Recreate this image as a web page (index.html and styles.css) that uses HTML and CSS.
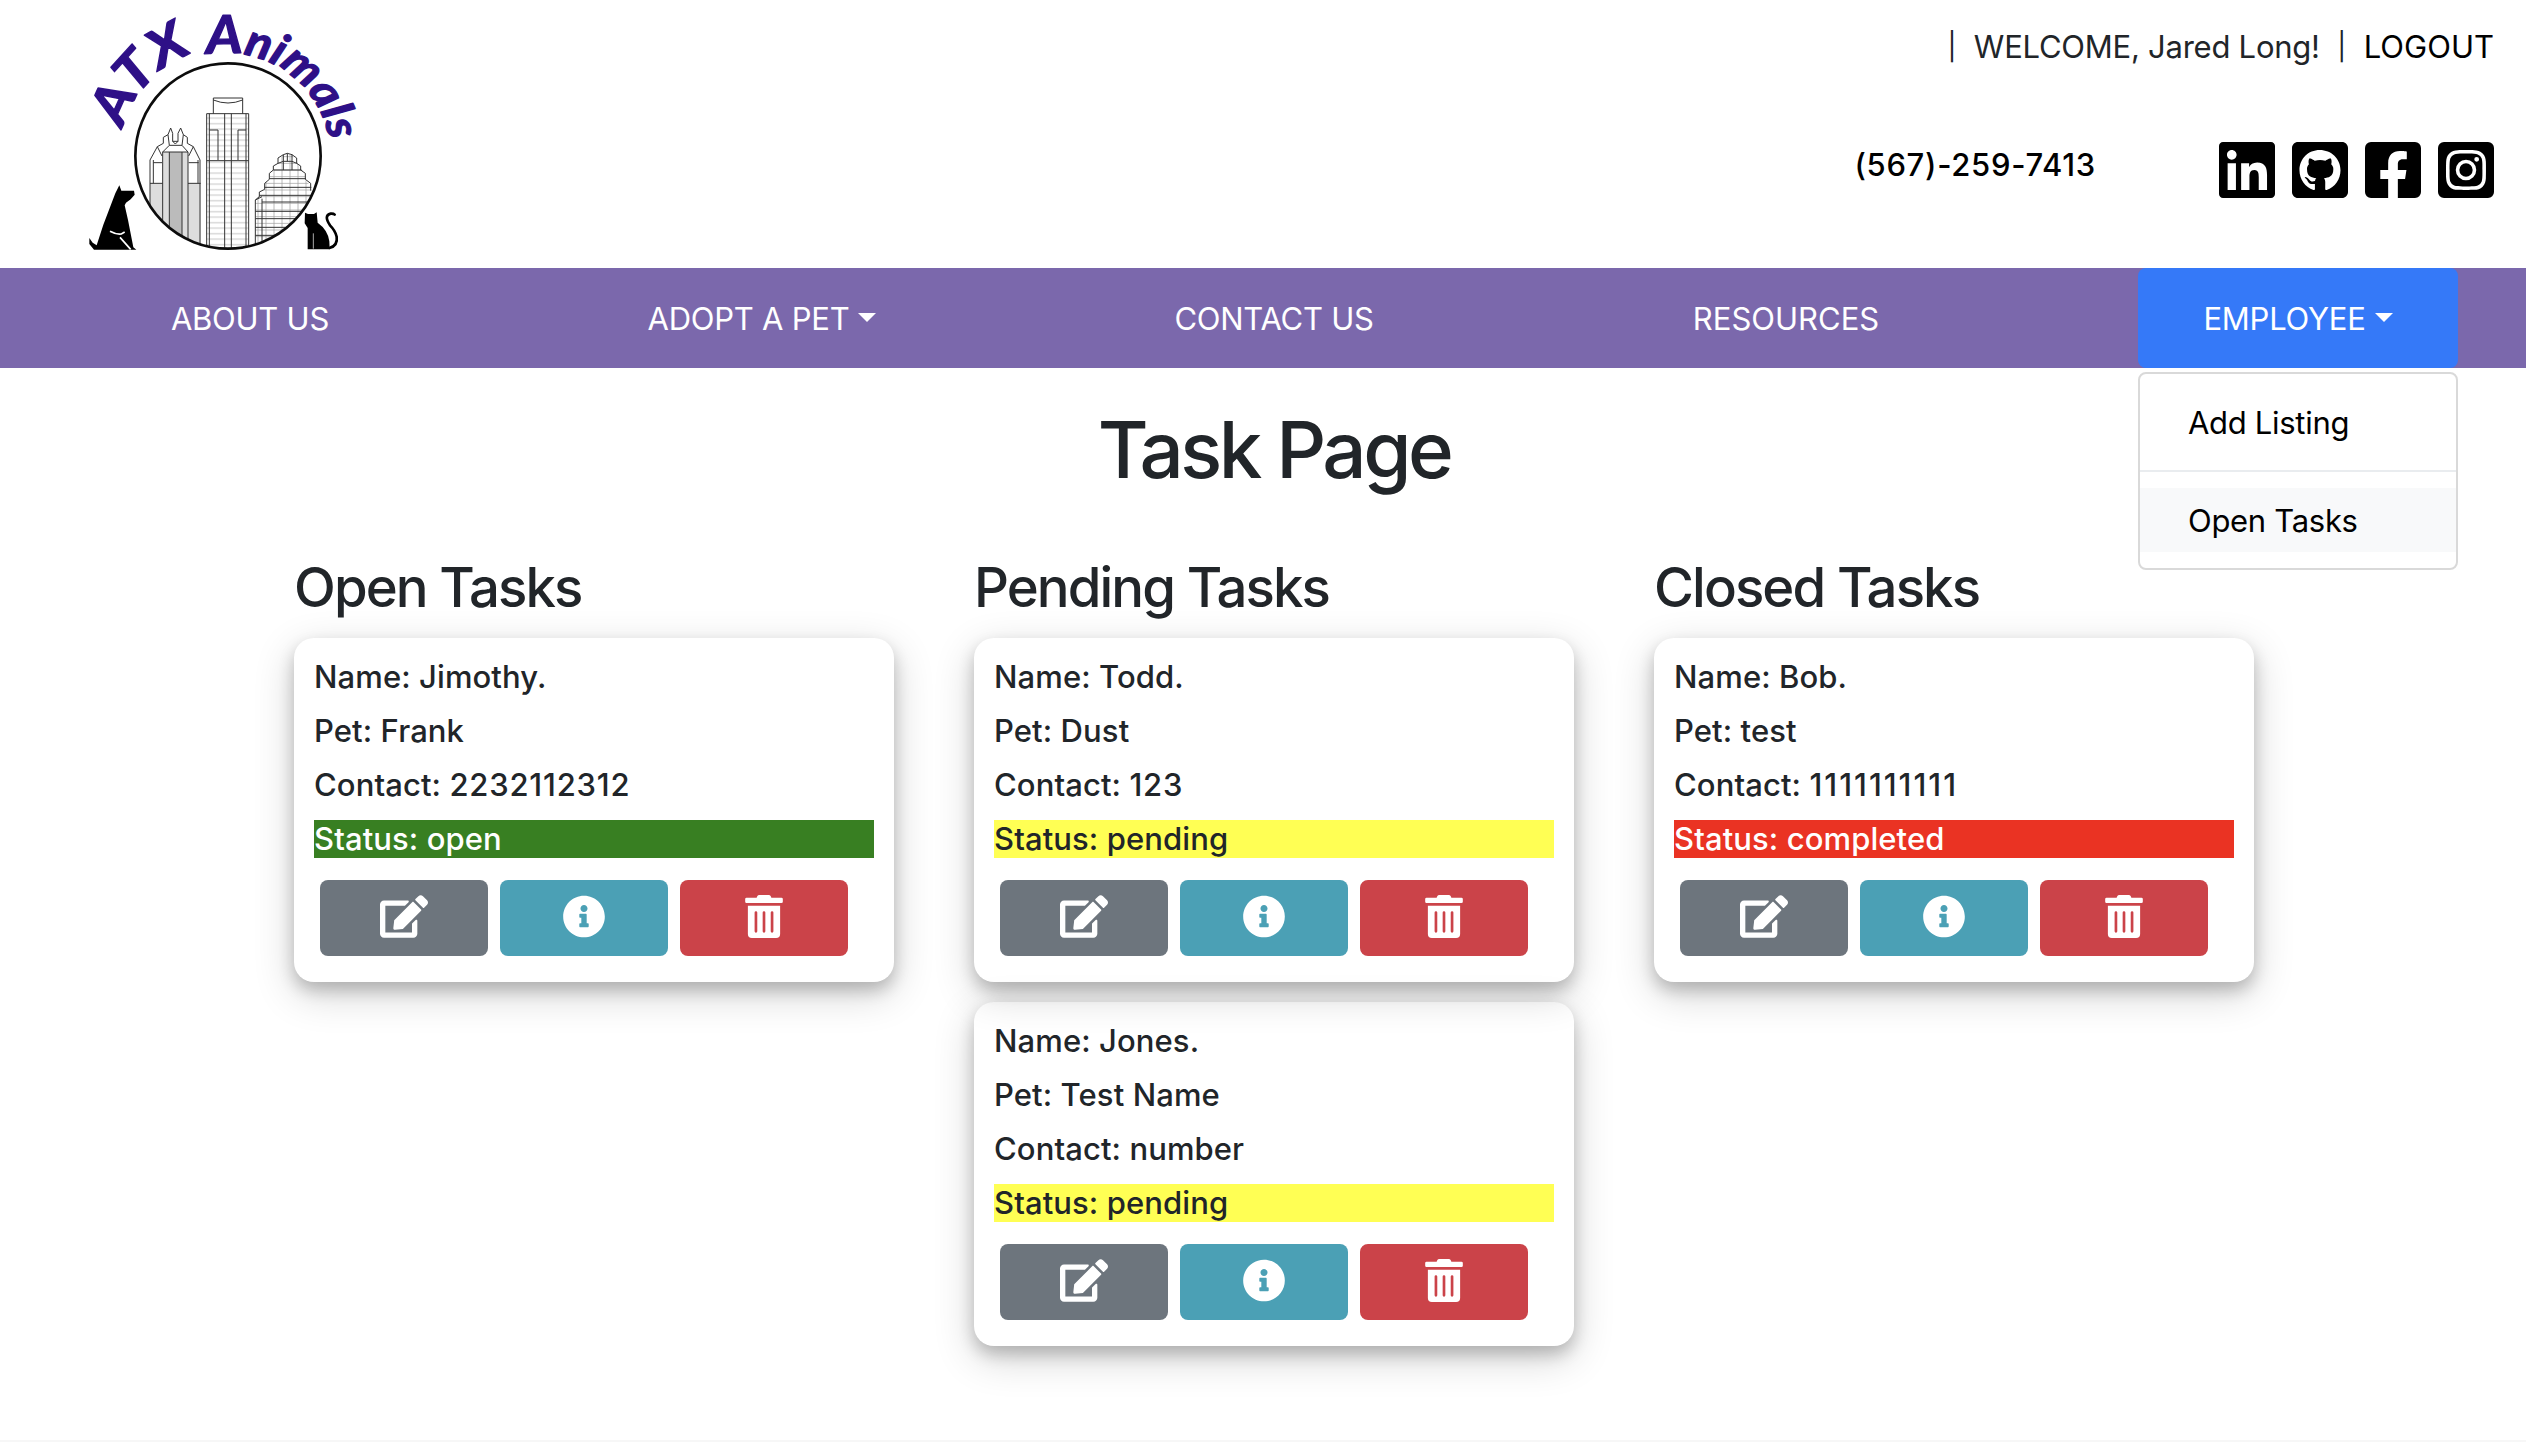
FILE: index.html
```html
<!DOCTYPE html>
<html lang="en">
<head>
<meta charset="utf-8">
<title>ATX Animals - Task Page</title>
<link rel="stylesheet" href="styles.css">
</head>
<body>
<svg class="sprite" aria-hidden="true">
  <symbol id="i-linkedin" viewBox="0 0 448 512"><path d="M416 32H31.9C14.3 32 0 46.5 0 64.3v383.4C0 465.5 14.3 480 31.9 480H416c17.6 0 32-14.5 32-32.3V64.3c0-17.8-14.4-32.3-32-32.3zM135.4 416H69V202.2h66.5V416zm-33.2-243c-21.3 0-38.5-17.3-38.5-38.5S80.9 96 102.2 96c21.2 0 38.5 17.3 38.5 38.5 0 21.3-17.2 38.5-38.5 38.5zm282.1 243h-66.4V312c0-24.8-.5-56.7-34.5-56.7-34.6 0-39.9 27-39.9 54.9V416h-66.4V202.2h63.7v29.2h.9c8.9-16.8 30.6-34.5 62.9-34.5 67.2 0 79.7 44.3 79.7 101.9V416z"/></symbol>
  <symbol id="i-github" viewBox="0 0 448 512"><path fill-rule="evenodd" d="M400 32H48C21.5 32 0 53.5 0 80v352c0 26.5 21.5 48 48 48h352c26.5 0 48-21.5 48-48V80c0-26.5-21.5-48-48-48zM277.3 415.7c-8.4 1.5-11.5-3.7-11.5-8 0-5.4.2-33 .2-55.3 0-15.6-5.2-25.5-11.3-30.7 37-4.1 76-9.2 76-73.1 0-18.2-6.5-27.3-17.1-39 1.7-4.3 7.4-22-1.7-45-13.9-4.3-45.7 17.9-45.7 17.9-13.2-3.7-27.5-5.6-41.6-5.6-14.1 0-28.4 1.9-41.6 5.6 0 0-31.8-22.2-45.7-17.9-9.1 22.9-3.5 40.6-1.7 45-10.6 11.7-15.6 20.8-15.6 39 0 63.6 37.3 69 74.3 73.1-4.8 4.3-9.1 11.7-10.6 22.3-9.5 4.3-33.8 11.7-48.3-13.9-9.1-15.8-25.5-17.1-25.5-17.1-16.2-.2-1.1 10.2-1.1 10.2 10.8 5 18.4 24.2 18.4 24.2 9.7 29.7 56.1 19.7 56.1 19.7 0 13.9.2 36.5.2 40.6 0 4.3-3 9.5-11.5 8-66-22.1-112.2-84.9-112.2-158.3 0-91.8 70.2-161.5 162-161.5S388 165.6 388 257.4c.1 73.4-44.7 136.3-110.7 158.3z"/></symbol>
  <symbol id="i-facebook" viewBox="0 0 448 512"><path d="M400 32H48A48 48 0 0 0 0 80v352a48 48 0 0 0 48 48h137.25V327.69h-63V256h63v-54.64c0-62.15 37-96.48 93.67-96.48 27.14 0 55.52 4.84 55.52 4.84v61h-31.27c-30.81 0-40.42 19.12-40.42 38.73V256h68.78l-11 71.69h-57.78V480H400a48 48 0 0 0 48-48V80a48 48 0 0 0-48-48z"/></symbol>
  <symbol id="i-instagram" viewBox="0 0 448 512"><path d="M224,202.66A53.34,53.34,0,1,0,277.36,256,53.38,53.38,0,0,0,224,202.66Zm124.71-41a54,54,0,0,0-30.41-30.41c-21-8.29-71-6.43-94.3-6.43s-73.25-1.93-94.31,6.43a54,54,0,0,0-30.41,30.41c-8.28,21-6.43,71.05-6.43,94.33S91,329.26,99.32,350.33a54,54,0,0,0,30.41,30.41c21,8.29,71,6.43,94.31,6.43s73.24,1.93,94.3-6.43a54,54,0,0,0,30.41-30.41c8.35-21,6.43-71.05,6.43-94.33S357.1,182.74,348.75,161.67ZM224,338a82,82,0,1,1,82-82A81.9,81.9,0,0,1,224,338Zm85.38-148.3a19.14,19.14,0,1,1,19.13-19.14A19.1,19.1,0,0,1,309.42,189.74ZM400,32H48A48,48,0,0,0,0,80V432a48,48,0,0,0,48,48H400a48,48,0,0,0,48-48V80A48,48,0,0,0,400,32ZM382.88,322c-1.29,25.63-7.14,48.34-25.85,67s-41.4,24.63-67,25.85c-26.41,1.49-105.59,1.49-132,0-25.63-1.29-48.26-7.15-67-25.85s-24.63-41.42-25.85-67c-1.49-26.42-1.49-105.61,0-132,1.29-25.63,7.07-48.34,25.85-67s41.47-24.56,67-25.78c26.41-1.49,105.59-1.49,132,0,25.63,1.29,48.33,7.15,67,25.85s24.63,41.42,25.85,67.05C384.37,216.44,384.37,295.56,382.88,322Z"/></symbol>
  <symbol id="i-edit" viewBox="0 0 576 512"><path d="M402.6 83.2l90.2 90.2c3.8 3.8 3.8 10 0 13.8L274.4 405.6l-92.8 10.3c-12.4 1.4-22.9-9.1-21.5-21.5l10.3-92.8L388.8 83.2c3.8-3.8 10-3.8 13.8 0zm162-22.9l-48.8-48.8c-15.2-15.2-39.9-15.2-55.2 0l-35.4 35.4c-3.8 3.8-3.8 10 0 13.8l90.2 90.2c3.8 3.8 10 3.8 13.8 0l35.4-35.4c15.2-15.3 15.2-40 0-55.2zM384 346.2V448H64V128h229.8c3.2 0 6.2-1.3 8.5-3.5l40-40c7.6-7.6 2.2-20.5-8.5-20.5H48C21.5 64 0 85.5 0 112v352c0 26.5 21.5 48 48 48h352c26.5 0 48-21.5 48-48V306.2c0-10.7-12.9-16-20.5-8.5l-40 40c-2.2 2.3-3.5 5.3-3.5 8.5z"/></symbol>
  <symbol id="i-info" viewBox="0 0 512 512"><path d="M256 8C119.043 8 8 119.083 8 256c0 136.997 111.043 248 248 248s248-111.003 248-248C504 119.083 392.957 8 256 8zm0 110c23.196 0 42 18.804 42 42s-18.804 42-42 42-42-18.804-42-42 18.804-42 42-42zm56 254c0 6.627-5.373 12-12 12h-88c-6.627 0-12-5.373-12-12v-24c0-6.627 5.373-12 12-12h12v-64h-12c-6.627 0-12-5.373-12-12v-24c0-6.627 5.373-12 12-12h64c6.627 0 12 5.373 12 12v100h12c6.627 0 12 5.373 12 12v24z"/></symbol>
  <symbol id="i-trash" viewBox="0 0 448 512"><path d="M32 464a48 48 0 0 0 48 48h288a48 48 0 0 0 48-48V128H32zm272-256a16 16 0 0 1 32 0v224a16 16 0 0 1-32 0zm-96 0a16 16 0 0 1 32 0v224a16 16 0 0 1-32 0zm-96 0a16 16 0 0 1 32 0v224a16 16 0 0 1-32 0zM432 32H312l-9.4-18.7A24 24 0 0 0 281.1 0H166.8a23.72 23.72 0 0 0-21.4 13.3L136 32H16A16 16 0 0 0 0 48v32a16 16 0 0 0 16 16h416a16 16 0 0 0 16-16V48a16 16 0 0 0-16-16z"/></symbol>
</svg>

<header class="header">
  <svg class="logo" viewBox="0 0 930 804" role="img" aria-label="ATX Animals">
    <defs>
      <path id="arc-atx" d="M160 385A325 325 0 0 1 384 156"/>
      <path id="arc-animals" d="M410 166A310 310 0 0 1 780 440"/>
      <clipPath id="ring"><circle cx="474" cy="468" r="276"/></clipPath>
      <pattern id="floors" width="22" height="16.5" patternUnits="userSpaceOnUse"><path d="M0 8H22" stroke="#aaa" stroke-width="2"/></pattern>
      <pattern id="grid" width="24" height="20" patternUnits="userSpaceOnUse"><path d="M0 10H24M12 0V20" stroke="#999" stroke-width="2" fill="none"/></pattern>
    </defs>
    <text class="logo-text"><textPath href="#arc-atx" textLength="318" lengthAdjust="spacingAndGlyphs">ATX</textPath></text>
    <text class="logo-text logo-text-small"><textPath href="#arc-animals" textLength="500" lengthAdjust="spacingAndGlyphs"><tspan class="logo-cap">A</tspan>nimals</textPath></text>
    <g clip-path="url(#ring)" fill="none" stroke="#333" stroke-width="3">
      <path fill="#ddd" stroke="none" d="M240 550H278V456H354V550H392V760H240z"/>
      <path fill="#bbb" stroke="none" d="M298 456H336V760H298z"/>
      <path d="M240 760V480L262 440L280 430V412L294 404L302 384L308 400V424H324V400L332 384L340 404L352 412V430L370 440L390 480V760M240 550H278M354 550H392M250 488H276M356 488H386M278 760V456H354V760M298 456V760M336 456V760M250 480V550M384 480V550M278 456L298 436H336L354 456M262 440L276 468M370 440L356 468M294 404L298 436M340 404L336 436M308 424L316 432L324 424"/>
      <path fill="url(#floors)" d="M410 760V341H536V760z"/>
      <path d="M430 341V294H518V341M430 300Q474 318 518 300M418 341V760M528 341V760M464 341V760M484 341V760M410 482H536M418 390H444V480M528 390H504V480"/>
      <path fill="url(#grid)" stroke="none" d="M556 760V600L584 570V550L600 540V520L622 500L630 474L652 460L676 474L688 500L706 520V540L724 560L732 760z"/>
      <path d="M556 760V600L568 590V576L584 568V550L598 538V520L610 510V498L624 490V474L640 464L652 460L666 464L680 474V490L692 498V510L706 520V538L722 550V572M576 760V596M556 600L576 590M640 464V510M652 460V484M666 464V510M624 490L640 484H666L680 490M610 510H694M598 536H708M584 562H724M568 586H730M576 606H730M556 634H720M556 656H710M556 682H690M556 706H680"/>
    </g>
    <circle cx="474" cy="468" r="278" fill="none" stroke="#0c0c0c" stroke-width="8"/>
    <path d="M148 556L154 572H192L194 584L182 598L168 608L164 616L174 660L190 742L199 749H72L58 732V714L68 728L80 736L100 674L136 580z"/>
    <path fill="none" stroke="#fff" stroke-width="5" d="M120 694Q138 704 154 702L164 696M150 712L182 748"/>
    <path d="M705 638L714 642H732L740 637L743 668Q774 690 778 724L779 748H713V684L704 670z"/>
    <path fill="none" stroke="#000" stroke-width="8" stroke-linecap="round" d="M778 744Q804 738 800 710Q796 692 780 676Q760 646 782 641Q790 640 794 644"/>
    <path fill="none" stroke="#fff" stroke-width="2" d="M730 700V746"/>
  </svg>
  <div class="header-side">
    <div class="account"><span class="bar">|</span><span>WELCOME, Jared Long!</span><span class="bar">|</span><a class="logout">LOGOUT</a></div>
    <div class="contact">
      <span class="phone">(567)-259-7413</span>
      <div class="social">
        <svg><use href="#i-linkedin"/></svg><svg><use href="#i-github"/></svg><svg><use href="#i-facebook"/></svg><svg><use href="#i-instagram"/></svg>
      </div>
    </div>
  </div>
</header>

<nav class="nav">
  <a class="nav-item">ABOUT US</a>
  <a class="nav-item caret">ADOPT A PET</a>
  <a class="nav-item">CONTACT US</a>
  <a class="nav-item resources">RESOURCES</a>
  <div class="dropdown">
    <a class="nav-item caret active">EMPLOYEE</a>
    <div class="menu">
      <a class="menu-item">Add Listing</a>
      <div class="divider"></div>
      <a class="menu-item hover">Open Tasks</a>
    </div>
  </div>
</nav>

<main class="main">
  <h1>Task Page</h1>
  <div class="columns">
    <section class="column">
      <h2>Open Tasks</h2>
      <article class="card">
        <p>Name: Jimothy.</p><p>Pet: Frank</p><p>Contact: <span class="digits">2232112312</span></p><p class="open">Status: open</p>
        <div class="actions"><button class="btn edit"><svg><use href="#i-edit"/></svg></button><button class="btn info"><svg><use href="#i-info"/></svg></button><button class="btn delete"><svg><use href="#i-trash"/></svg></button></div>
      </article>
    </section>
    <section class="column">
      <h2>Pending Tasks</h2>
      <article class="card">
        <p>Name: Todd.</p><p>Pet: Dust</p><p>Contact: <span class="digits">123</span></p><p class="pending">Status: pending</p>
        <div class="actions"><button class="btn edit"><svg><use href="#i-edit"/></svg></button><button class="btn info"><svg><use href="#i-info"/></svg></button><button class="btn delete"><svg><use href="#i-trash"/></svg></button></div>
      </article>
      <article class="card">
        <p>Name: Jones.</p><p>Pet: Test Name</p><p>Contact: number</p><p class="pending">Status: pending</p>
        <div class="actions"><button class="btn edit"><svg><use href="#i-edit"/></svg></button><button class="btn info"><svg><use href="#i-info"/></svg></button><button class="btn delete"><svg><use href="#i-trash"/></svg></button></div>
      </article>
    </section>
    <section class="column">
      <h2>Closed Tasks</h2>
      <article class="card">
        <p>Name: Bob.</p><p>Pet: test</p><p>Contact: <span class="digits wide">1111111111</span></p><p class="completed">Status: completed</p>
        <div class="actions"><button class="btn edit"><svg><use href="#i-edit"/></svg></button><button class="btn info"><svg><use href="#i-info"/></svg></button><button class="btn delete"><svg><use href="#i-trash"/></svg></button></div>
      </article>
    </section>
  </div>
</main>
<footer class="footer"></footer>
</body>
</html>
```
FILE: styles.css
```css
* { box-sizing: border-box; }

body {
  margin: 0;
  height: 1442px;
  overflow: hidden;
  display: flex;
  flex-direction: column;
  background: #fff;
  color: #212529;
  font: 400 31px/38px Inter, "Liberation Sans", sans-serif;
  letter-spacing: -0.25px;
}

.sprite { display: none; }

.header {
  flex: none;
  height: 268px;
  padding: 0 32px 0 70px;
  display: flex;
  justify-content: space-between;
}

.logo { width: 310px; height: 268px; }

.logo-text {
  font: italic 700 158px Lato, sans-serif;
  letter-spacing: 0;
  fill: #2e1087;
  stroke: #2e1087;
  stroke-width: 4px;
  stroke-linejoin: round;
}

.logo-text-small { font-size: 134px; }
.logo-cap { font-size: 158px; }

.header-side {
  display: flex;
  flex-direction: column;
  align-items: flex-end;
  padding-top: 28px;
}

.account { display: flex; gap: 17px; }
.bar { font-size: 27px; line-height: 37px; width: 10px; text-align: center; }
.logout { color: #000; letter-spacing: 0; }

.contact {
  display: flex;
  align-items: flex-start;
  gap: 123px;
  margin-top: 72px;
}

.phone {
  color: #000;
  font-weight: 500;
  letter-spacing: 0.7px;
  padding-top: 8px;
}

.social { display: flex; gap: 17px; }
.social svg { width: 56px; height: 64px; }

.nav {
  flex: none;
  height: 100px;
  padding-left: 90px;
  display: flex;
  gap: 192px;
  background: #7b68ac;
}

.nav-item {
  width: 320px;
  height: 100px;
  padding-top: 1px;
  display: flex;
  align-items: center;
  justify-content: center;
  color: #fff;
}

.nav-item.resources { letter-spacing: 0; }

.caret::after {
  content: "";
  margin-left: 9px;
  margin-top: -3px;
  border: 9px solid transparent;
  border-top-color: #fff;
  border-bottom: 0;
}

.dropdown { position: relative; }

.nav-item.active {
  background: #3579f8;
  border-radius: 8px;
}

.menu {
  position: absolute;
  top: 104px;
  left: 0;
  width: 320px;
  padding: 16px 0;
  background: #fff;
  border: 2px solid #d9d9d9;
  border-radius: 8px;
}

.menu-item {
  display: block;
  padding: 14px 48px 12px;
  color: #000;
  letter-spacing: -0.3px;
}

.menu-item.hover { background: #f8f9fa; }

.divider {
  height: 2px;
  margin: 16px 0;
  background: #e9ecef;
}

.main {
  flex: 1;
  min-height: 0;
  width: 1960px;
  margin-left: 294px;
  padding-top: 34px;
}

h1 {
  margin: 0 0 56px;
  text-align: center;
  font-size: 78px;
  font-weight: 500;
  line-height: 96px;
  letter-spacing: -3.5px;
}

h2 {
  margin: 0 0 17px;
  font-size: 54.5px;
  font-weight: 500;
  line-height: 67px;
  letter-spacing: -1.9px;
}

.columns { display: flex; gap: 80px; }

.column { width: 600px; }

.card {
  height: 344px;
  padding: 20px;
  margin-bottom: 20px;
  border-radius: 20px;
  box-shadow: 0 8px 16px rgba(0, 0, 0, 0.2), 0 12px 40px rgba(0, 0, 0, 0.19);
  font-weight: 500;
  letter-spacing: 0.1px;
}

.card p { margin: 0 0 16px; height: 38px; }

.digits { letter-spacing: 0.8px; }
.digits.wide { letter-spacing: 2px; }

.open { background: #387f22; color: #fff; }
.pending { background: #ffff54; }
.completed { background: #ea3323; color: #fff; }

.actions {
  display: flex;
  gap: 12px;
  padding: 6px 6px 0;
}

.btn {
  width: 168px;
  height: 76px;
  padding: 0 0 4px;
  border: 0;
  border-radius: 8px;
  display: flex;
  align-items: center;
  justify-content: center;
}

.btn svg { width: 48px; height: 43px; fill: #fff; }

.edit { background: #6d757d; }
.info { background: #4ba0b5; }
.delete { background: #cb4349; }

.footer {
  flex: none;
  height: 2px;
  background: #f7f7f7;
}
```
